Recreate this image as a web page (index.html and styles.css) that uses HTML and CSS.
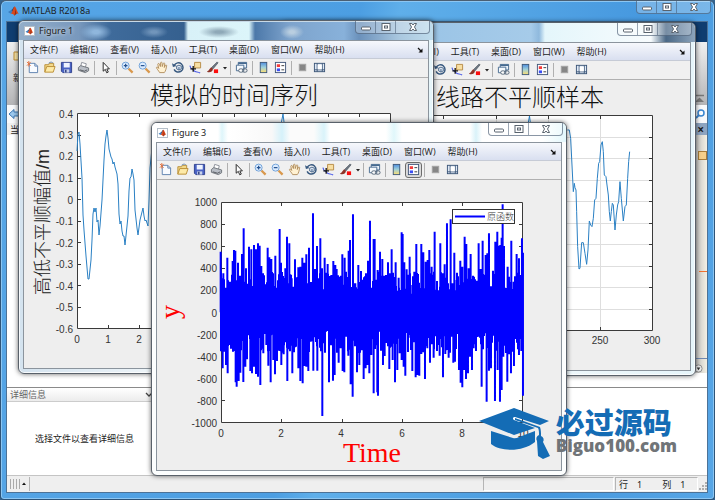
FILE: index.html
```html
<!DOCTYPE html>
<html lang="zh-CN">
<head>
  <meta charset="UTF-8">
  <meta name="viewport" content="width=device-width, initial-scale=1.0">
  <title>MATLAB R2018a</title>
  <link rel="stylesheet" href="styles.css">
</head>
<body>
  <svg class="sprite" aria-hidden="true">
    <defs>
      <linearGradient id="bar-fill" x1="0" y1="0" x2="0" y2="1">
        <stop offset="0" stop-color="#4f8fe0"/><stop offset=".5" stop-color="#9fd0d8"/><stop offset="1" stop-color="#ffdf70"/>
      </linearGradient>
    </defs>
    <symbol id="i-logo" viewBox="0 0 12 12">
      <path d="M0 7l3.500-2 2 2-2.500 2z" fill="#3c7fc0"/>
      <path d="M3.500 5C5 4.500 6 1 7.200 1L5.500 7z" fill="#274a78"/>
      <path d="M7.200 1c1.300 0 2.600 5 4.600 8.500-2-1.500-3-.5-4.800 1.700C6.200 9.500 5 8.500 3 9 5 8 6.200 1 7.200 1z" fill="#d9481c"/>
      <path d="M7.200 1c.8 2 .9 6-.2 10.200 1-1.200 1.600-1.800 2.300-2z" fill="#8f2a14"/>
    </symbol>
    <symbol id="i-new" viewBox="0 0 14 14">
      <path d="M3.500 2.500h6l3 3v7h-9z" fill="#f8fbff" stroke="#5b7fae"/>
      <path d="M9.500 2.500v3h3" fill="none" stroke="#5b7fae"/>
      <path d="M1 1l4 4M5 1L1 5M3 0v6" stroke="#e2703c" stroke-width="1"/>
    </symbol>
    <symbol id="i-open" viewBox="0 0 14 14">
      <path d="M2 12V4h4l1-1.500h4.500V6" fill="#f3d98a" stroke="#b98d33"/>
      <path d="M2 12l2-6h9l-2 6z" fill="#fdeaa8" stroke="#b98d33"/>
      <path d="M6 2.500c2-2 4-1.500 5 0" fill="none" stroke="#6f8fb5"/>
    </symbol>
    <symbol id="i-save" viewBox="0 0 14 14">
      <path d="M1.500 1.500h11v11h-9.500l-1.500-1.500z" fill="#4a63c4" stroke="#2c3f8c"/>
      <path d="M4 2h6.500v5H4z" fill="#eef3ff"/><path d="M4.500 9h5.500v3.500H4.500z" fill="#c9d2ea"/><path d="M5.500 9.500h1.500v3H5.500z" fill="#26367a"/>
    </symbol>
    <symbol id="i-print" viewBox="0 0 14 14">
      <path d="M4 6l1-4.500 5 1.500-1 4" fill="#fff" stroke="#8a8f98"/>
      <path d="M1.500 7L4 5l8.500 2.500v3L9 12.500 1.500 10z" fill="#b9bec6" stroke="#6c7178"/>
      <path d="M3 9.500l5 1.500 3-1.500" fill="none" stroke="#55595f"/>
    </symbol>
    <symbol id="i-arrow" viewBox="0 0 14 14">
      <path d="M4.500 1.500v9.500l2.300-2 1.500 3.700 1.700-.8-1.600-3.400h2.800z" fill="#fff" stroke="#222"/>
    </symbol>
    <symbol id="i-zoomin" viewBox="0 0 14 14">
      <path d="M8 8l4.500 4.500" stroke="#d9984c" stroke-width="2.400"/>
      <circle cx="5" cy="5" r="3.800" fill="#dcecff" stroke="#6d9fd6"/>
      <path d="M3 5h4M5 3v4" stroke="#22508f" stroke-width="1.300"/>
    </symbol>
    <symbol id="i-zoomout" viewBox="0 0 14 14">
      <path d="M8 8l4.500 4.500" stroke="#d9984c" stroke-width="2.400"/>
      <circle cx="5" cy="5" r="3.800" fill="#dcecff" stroke="#6d9fd6"/>
      <path d="M3 5h4" stroke="#22508f" stroke-width="1.300"/>
    </symbol>
    <symbol id="i-pan" viewBox="0 0 14 14">
      <path d="M5 12.500C4 10.500 1.500 8 1.500 7c.5-1 1.600-.3 2.500 1L3 3.500c.3-1.200 1.500-1 1.800 0L5.800 6 5.900 2c.4-1 1.500-.9 1.700 0l.2 4L9 2.500c.6-.8 1.500-.4 1.500.5L10 7l1.300-2.500c.8-.6 1.500 0 1.200 1C12 8 11.500 11 10 12.500z" fill="#fff1d2" stroke="#a9834f" stroke-width=".9"/>
    </symbol>
    <symbol id="i-rotate" viewBox="0 0 14 14">
      <path d="M2.500 4.500A5 5 0 1 1 2.300 9" fill="none" stroke="#38597f" stroke-width="1.600"/>
      <path d="M0 2.500l1 4 4-1z" fill="#38597f"/>
      <path d="M5 5.500l2.500-1 2.500 1v3l-2.500 1.300L5 8.500z" fill="#dce6f2" stroke="#38597f" stroke-width=".9"/><path d="M7.500 6.500v3" stroke="#38597f"/>
    </symbol>
    <symbol id="i-cursor" viewBox="0 0 14 14">
      <path d="M6 1.500h6.500v6H6z" fill="#f8dfa2" stroke="#b58a45"/>
      <path d="M1 5c1 5 3 3 4 5 2 3 4 1 7 3" fill="none" stroke="#4757e8" stroke-width="1.200"/>
      <path d="M1.500 8.500h6M4.500 5.500v6" stroke="#111" stroke-width="1.400"/>
    </symbol>
    <symbol id="i-brush" viewBox="0 0 14 14">
      <path d="M12 1L6 7l1.500 1.500L13 2z" fill="#6e7884" stroke="#47505a" stroke-width=".7"/>
      <path d="M6 7c-2 0-2 3-5 4.500 3 1.500 6 0 6.500-3z" fill="#8d3326"/>
      <path d="M8.500 9h4.500v4H8.500z" fill="#fb0d0d"/>
    </symbol>
    <symbol id="i-link" viewBox="0 0 14 14">
      <path d="M3.500 1.500h9v6h-9z" fill="#e8f0f8" stroke="#45698f"/><path d="M3.500 2.500h9" stroke="#45698f" stroke-width="1.500"/>
      <path d="M1.500 4.500h8v6h-8z" fill="#f5f9fd" stroke="#45698f"/>
      <rect x="4" y="8.500" width="5" height="3.500" rx="1.700" fill="#fff" stroke="#4d5f73"/><rect x="8" y="8.500" width="5" height="3.500" rx="1.700" fill="none" stroke="#4d5f73"/>
    </symbol>
    <symbol id="i-colorbar" viewBox="0 0 14 14">
      <rect x="3.500" y="1.500" width="7" height="11" fill="url(#bar-fill)" stroke="#3d5878"/>
    </symbol>
    <symbol id="i-legend" viewBox="0 0 14 14">
      <rect x="1.500" y="1.500" width="11" height="11" fill="#fff" stroke="#42577a"/>
      <path d="M3 3.500h3.500v3H3z" fill="#f23b3b"/><path d="M3 8h3.500v3H3z" fill="#3b4ef2"/>
      <path d="M8 5h3M8 9.500h3" stroke="#333"/>
    </symbol>
    <symbol id="i-hide" viewBox="0 0 14 14">
      <rect x="3.500" y="3.500" width="7" height="7" fill="#868686" stroke="#a5a5a5"/>
    </symbol>
    <symbol id="i-show" viewBox="0 0 14 14">
      <rect x="1.500" y="2.500" width="11" height="9" fill="#dfe9f5" stroke="#3b5577"/>
      <path d="M4.500 2.500v9M10 2.500v9M1.500 9.500h11" stroke="#3b5577"/><path d="M5 4h4.500v5H5z" fill="#fff"/>
    </symbol>
    <symbol id="i-min" viewBox="0 0 14 10"><rect x="2.500" y="5" width="9" height="3" rx="1" fill="#fff" stroke="#59636e"/></symbol>
    <symbol id="i-max" viewBox="0 0 14 10"><rect x="3" y="1.500" width="8" height="7" fill="#fff" stroke="#59636e"/><rect x="5.500" y="4" width="3" height="2" fill="#fff" stroke="#59636e"/></symbol>
    <symbol id="i-close" viewBox="0 0 14 10"><path d="M3.500 1.500h2.300L7 3l1.200-1.500h2.300L8.500 5l2 3.500H8.200L7 7 5.800 8.500H3.500l2-3.500z" fill="#fff" stroke="#59636e"/></symbol>
  </svg>

  <div class="app">
    <header class="titlebar">
      <svg class="logo"><use href="#i-logo"/></svg>
      <h1 class="caption">MATLAB R2018a</h1>
      <div class="controls" data-controls></div>
    </header>

    <main class="desktop">
      <div class="tabstrip"></div>
      <div class="ribbon">
        <div class="ribbon-item">
          <svg viewBox="0 0 12 12" width="12" height="12"><path d="M1 2h4l1 2h6v6H1z" fill="#fbe6a8" stroke="#bd8c35"/></svg>
          <span>新建</span>
        </div>
        <svg class="collapse" viewBox="0 0 9 9"><path d="M0 1.500h9" stroke="#777" stroke-width="1.500"/><path d="M0 8l4.500-4.500L9 8z" fill="#777"/></svg>
      </div>
      <div class="address">
        <svg viewBox="0 0 12 12" width="12" height="12"><path d="M1 6l5-4.500V4h5v4H6v2.500z" fill="#9cc8ee" stroke="#3d78b4"/></svg>
        <svg viewBox="0 0 12 12" width="12" height="12"><circle cx="7" cy="5" r="3" fill="#fff" stroke="#3a86d0" stroke-width="1.500"/><path d="M5 7L2 10" stroke="#3a86d0" stroke-width="1.800"/></svg>
      </div>
      <div class="panel-head">
        <span>当前文件夹</span>
        <span class="panel-close">×</span>
      </div>
      <div class="workspace">
        <div class="folder-list"></div>
        <div class="side-strip">
          <span class="chip"></span>
          <span class="marker"></span>
          <span class="round"><svg viewBox="0 0 10 10"><circle cx="5" cy="5" r="4" fill="#eee" stroke="#888"/><path d="M3 4h4L5 7z" fill="#333"/></svg></span>
        </div>
      </div>
      <section class="details">
        <h2>详细信息 <svg viewBox="0 0 8 6"><path d="M1 1l3 3 3-3" fill="none" stroke="#444" stroke-width="1.300"/></svg></h2>
        <p>选择文件以查看详细信息</p>
      </section>
      <footer class="status">
        <span class="grip"></span>
        <span class="up"><svg viewBox="0 0 4 4"><path d="M0 3l2-2.500L4 3z" fill="#111"/></svg></span>
        <span class="cell message"></span>
        <span class="cell position"><span>行</span><span>1</span><span>列</span><span>1</span></span>
        <svg class="resize" viewBox="0 0 9 9"><path d="M7 1h2M4 4h2M7 4h2M1 7h2M4 7h2M7 7h2" stroke="#999" stroke-width="1.500"/></svg>
      </footer>
    </main>
  </div>

  <section class="figure figure-2" aria-label="Figure 2">
    <header class="figure-title"><div class="controls" data-controls></div></header>
    <div class="figure-body">
      <div data-bars></div>
      <svg class="canvas" viewBox="0 0 404 290">
        <rect x="53.500" y="35.500" width="313" height="215" fill="#fff"/>
        <path class="grid" d="M210.500 36v214M262.500 36v214M314.500 36v214M54 57.500h312M54 78.500h312M54 100.500h312M54 121.500h312M54 143.500h312M54 164.500h312M54 186.500h312M54 207.500h312M54 229.500h312"/>
        <path class="axis" d="M53.500 35.500h313v215h-313zM157.500 36v3M210.500 36v3M262.500 36v3M314.500 36v3M314.500 250v-3M262.500 250v-3M366 57.500h-3M366 78.500h-3M366 100.500h-3M366 121.500h-3M366 143.500h-3M366 164.500h-3M366 186.500h-3M366 207.500h-3M366 229.500h-3"/>
        <path class="curve" d="M242 44l1.500-8 1 8"/>
        <polyline class="curve" transform="translate(174 35) scale(.3333)" points="322,45 328,45 332,70 336,150 340,230 343,205 345,218 348,225 350,290 353,395 357,462 360,460 365,383 370,383 375,415 380,448 384,405 388,318 392,330 396,335 400,310 404,255 408,250 412,190 416,145 419,140 423,90 427,80 430,110 433,180 438,185 441,210 445,240 448,290 451,318 454,290 457,265 460,270 465,345 469,300 473,270 476,260 480,200 484,250 490,318 495,275 499,270 503,190 506,140 509,110"/>
        <text class="plot-title" x="318" y="26" text-anchor="end">线路不平顺样本</text>
        <g class="tick" text-anchor="middle"><text x="314" y="264">250</text><text x="366" y="264">300</text></g>
      </svg>
    </div>
  </section>

  <section class="figure figure-1" aria-label="Figure 1">
    <header class="figure-title">
      <span class="logo-box"><svg><use href="#i-logo"/></svg></span>
      <h2 class="caption">Figure 1</h2>
      <div class="controls" data-controls></div>
    </header>
    <div class="figure-body">
      <div data-bars></div>
      <svg class="canvas" viewBox="0 0 404 290">
        <rect x="53.500" y="35.500" width="313" height="215" fill="#fff"/>
        <path class="axis" d="M53.500 35.500h313v215h-313zM84.500 36v3M115.500 36v3M147.500 36v3M178.500 36v3M210.500 36v3M241.500 36v3M272.500 36v3M304.500 36v3M335.500 36v3M84.500 250v-3M115.500 250v-3M54 57.500h3M54 78.500h3M54 100.500h3M54 121.500h3M54 143.500h3M54 164.500h3M54 186.500h3M54 207.500h3M54 229.500h3"/>
        <path class="curve" d="M257.500 44l1.500-8 1 8"/>
        <polyline class="curve" points="53,73 54,56 55,54 56,66 58,100 59,137 60,152 62,178 64,201 65,201 67,182 68,162 69,136 70,130 71,134 72,130 73,144 74,142 75,157 76,148 78,122 80,82 81,66 82,58 83,52 84,60 85,71 87,79 88,81 89,86 90,84 91,89 93,96 94,106 95,136 96,146 97,143 98,153 99,158 100,158 101,167 103,148 104,138 105,113 106,100 107,99 108,91 109,96 110,102 111,132 113,150 114,157 116,142 118,134 119,130 120,138 121,143 122,142 124,148 125,122 126,90 128,70"/>
        <text class="plot-title" x="210" y="26" text-anchor="middle">模拟的时间序列</text>
        <text class="axis-name" transform="translate(25 217) rotate(-90)">高低不平顺幅值/m</text>
        <g class="tick" text-anchor="end">
          <text x="49" y="40">0.4</text><text x="49" y="61">0.3</text><text x="49" y="82">0.2</text><text x="49" y="104">0.1</text><text x="49" y="126">0</text><text x="49" y="147">-0.1</text><text x="49" y="169">-0.2</text><text x="49" y="190">-0.3</text><text x="49" y="212">-0.4</text><text x="49" y="233">-0.5</text><text x="49" y="255">-0.6</text>
        </g>
        <g class="tick" text-anchor="middle"><text x="53" y="265">0</text><text x="84" y="265">1</text><text x="115" y="265">2</text></g>
      </svg>
    </div>
  </section>

  <section class="figure figure-3" aria-label="Figure 3">
    <header class="figure-title">
      <span class="logo-box"><svg><use href="#i-logo"/></svg></span>
      <h2 class="caption">Figure 3</h2>
      <div class="controls" data-controls></div>
    </header>
    <div class="figure-body">
      <div data-bars="legend"></div>
      <svg class="canvas" viewBox="0 0 404 290">
        <rect x="64.500" y="22.500" width="301" height="220" fill="#fff"/>
        <path class="axis" d="M64.500 22.500h301v220h-301zM124.500 23v3M185.500 23v3M245.500 23v3M305.500 23v3M124.500 242v-3M185.500 242v-3M245.500 242v-3M305.500 242v-3M65 44.500h3M65 66.500h3M65 88.500h3M65 220.500h3M365 44.500h-3M365 66.500h-3M365 220.500h-3"/>
        <path id="noise" class="noise" transform="translate(53 10) scale(.3333)"/>
        <rect x="295.500" y="29.500" width="62" height="14" fill="#fff" stroke="#333"/>
        <path d="M298 36.500h30" stroke="#0000ff" stroke-width="2"/>
        <text class="legend-name" x="330" y="40">原函数</text>
        <g class="tick" text-anchor="end">
          <text x="60" y="26">1000</text><text x="60" y="48">800</text><text x="60" y="70">600</text><text x="60" y="92">400</text><text x="60" y="114">200</text><text x="60" y="137">0</text><text x="60" y="159">-200</text><text x="60" y="181">-400</text><text x="60" y="203">-600</text><text x="60" y="225">-800</text><text x="60" y="247">-1000</text>
        </g>
        <g class="tick" text-anchor="middle"><text x="64" y="257">0</text><text x="124" y="257">2</text><text x="184" y="257">4</text><text x="245" y="257">6</text><text x="305" y="257">8</text><text x="366" y="257">10</text></g>
        <text class="red-name" x="215" y="282" text-anchor="middle">Time</text>
        <text class="red-name" transform="translate(22 139) rotate(-90)">y</text>
      </svg>
    </div>
  </section>

  <div class="brand">
    <svg viewBox="0 0 72 52">
      <path d="M0 13L35 0l35 13-9 4-25-8c-2-.5-3 2-1 3l21 8-21 7z" fill="#146cb5"/>
      <path d="M12 23l22 7c2 .6 4 0 6-1l16-6v11c-12 10-34 10-44 2z" fill="#146cb5"/>
      <path d="M36 10l25 9c1 3 1 6 1 9a4 4 0 0 1 2 6l7 14-7 3-5-3-1-15a4 4 0 0 1 2-6c0-3 0-5-1-7l-23-8z" fill="#146cb5"/>
    </svg>
    <div class="brand-text">
      <strong>必过源码</strong>
      <span>Biguo100.com</span>
    </div>
  </div>

  <template id="bars">
    <nav class="menubar">
      <button>文件(F)</button><button>编辑(E)</button><button>查看(V)</button><button>插入(I)</button><button>工具(T)</button><button>桌面(D)</button><button>窗口(W)</button><button>帮助(H)</button>
      <svg class="dock" viewBox="0 0 6 6"><path d="M1 1l3 3" stroke="#111" stroke-width="1.300"/><path d="M5.500 1.500v4h-4z" fill="#111"/></svg>
    </nav>
    <div class="toolbar"></div>
  </template>

  <script src="script.js"></script>
</body>
</html>
```
FILE: styles.css
```css
* {
  margin: 0;
  padding: 0;
  box-sizing: border-box;
}

body {
  font-family: "Noto Sans", "Noto Sans CJK SC", sans-serif;
  font-size: 9px;
  color: #1c1c1c;
  background: #35648f;
  min-height: 100vh;
  overflow: hidden;
}

button {
  font: inherit;
  color: inherit;
  background: none;
  border: none;
}

svg {
  display: block;
}

.sprite {
  position: absolute;
  width: 0;
  height: 0;
}

.caption {
  font-size: 9px;
  font-weight: 400;
  line-height: 12px;
}

/* main window */
.app {
  display: flex;
  flex-direction: column;
  height: 100vh;
  padding: 0 6px 6px 5px;
  background: linear-gradient(100deg, #57a6e6 0%, #4c9ee2 45%, #5fafea 50%, #4799df 80%, #57a6e6 100%);
  border: 1px solid #2e5478;
  border-top-color: #4a5f73;
  border-radius: 6px 6px 4px 4px;
  box-shadow: inset 0 0 0 1px #8cc6f2;
}

.titlebar {
  display: flex;
  align-items: center;
  gap: 3px;
  height: 20px;
  flex: none;
  padding-left: 2px;
}

.titlebar .logo {
  width: 11px;
  height: 12px;
}

.controls {
  display: flex;
  align-self: flex-start;
  margin-left: auto;
  height: 13px;
  border: 1px solid rgba(60, 80, 105, 0.6);
  border-top: none;
  border-radius: 0 0 4px 4px;
  background: rgba(255, 255, 255, 0.25);
}

.titlebar .controls {
  margin-right: -3px;
}

.controls button {
  width: 20px;
  display: flex;
  align-items: center;
  justify-content: center;
  border-right: 1px solid rgba(60, 80, 105, 0.5);
}

.controls button:last-child {
  width: 33px;
  border-right: none;
}

.controls svg {
  width: 14px;
  height: 10px;
}

.desktop {
  flex: 1;
  display: flex;
  flex-direction: column;
  min-height: 0;
  background: #fff;
  border: 1px solid #4d7296;
}

.tabstrip {
  height: 20px;
  background: #0f3d70;
}

.ribbon {
  display: flex;
  justify-content: space-between;
  height: 63px;
  padding: 8px 3px 2px 6px;
  background: linear-gradient(#f0f0f0, #b4b4b6);
}

.ribbon-item {
  display: flex;
  flex-direction: column;
  gap: 9px;
}

.collapse {
  width: 9px;
  height: 9px;
  align-self: flex-end;
}

.address {
  display: flex;
  align-items: center;
  justify-content: space-between;
  height: 18px;
  background: #f8f9fb;
  padding: 0 1px;
}

.panel-head {
  display: flex;
  align-items: center;
  justify-content: space-between;
  height: 12px;
  padding: 0 3px;
  background: linear-gradient(90deg, #f0f0f0 50%, #8da4c0 50%);
}

.panel-close {
  font-size: 12px;
  font-weight: 700;
}

.workspace {
  flex: 1;
  display: flex;
  justify-content: space-between;
  border-bottom: 1px solid #8a8a8a;
}

.side-strip {
  width: 14px;
  display: flex;
  flex-direction: column;
  align-items: flex-end;
  background: linear-gradient(90deg, #b8b8b8, #f4f0e4);
  padding-top: 16px;
  margin-bottom: 14px;
}

.chip {
  width: 9px;
  height: 9px;
  border: 1px solid #a87d3a;
  background: #f5cf8a;
}

.marker {
  width: 8px;
  height: 1px;
  flex: none;
  margin-top: 111px;
  background: #f07030;
}

.round {
  margin-top: auto;
  padding: 5px 4px 0 0;
  border-top: 1px solid #7088b0;
}

.round svg {
  width: 9px;
  height: 9px;
}

.details h2 {
  display: flex;
  align-items: center;
  height: 14px;
  width: 146px;
  padding-left: 3px;
  font-size: 9px;
  font-weight: 400;
  color: #666;
  background: linear-gradient(#fff, #ececec);
  border-bottom: 1px solid #ccc;
}

.details h2 svg {
  width: 8px;
  height: 6px;
  margin-left: auto;
}

.details p {
  height: 73px;
  padding-left: 28px;
  line-height: 74px;
}

.status {
  display: flex;
  align-items: center;
  height: 17px;
  padding: 1px 0;
  background: #efefef;
  border-top: 1px solid #c4c4c4;
}

.grip {
  width: 11px;
  height: 10px;
  margin-left: 3px;
  background: repeating-linear-gradient(90deg, #aaa 0 1px, #efefef 1px 3px);
}

.up {
  display: flex;
  align-items: center;
  height: 14px;
  padding: 0 3px 0 1px;
  border-right: 1px solid #b5b5b5;
}

.up svg {
  width: 4px;
  height: 4px;
}

.cell {
  height: 14px;
  border: 1px solid #b5b5b5;
  border-right-color: #fff;
  border-bottom-color: #fff;
}

.message {
  width: 131px;
  margin-left: auto;
}

.position {
  display: flex;
  align-items: center;
  gap: 9px;
  width: 83px;
  margin-left: 1px;
  padding-left: 3px;
}

.position span:nth-child(3) {
  margin-left: 11px;
}

.resize {
  width: 9px;
  height: 9px;
  align-self: flex-end;
}

/* figure windows */
.figure {
  position: absolute;
  width: 416px;
  padding: 0 4px 4px;
  border: 1px solid #59616a;
  border-radius: 6px;
  background: linear-gradient(90deg, #d4e3ef 0, #f4f9fb 40%, #e6f5fa 100%);
  box-shadow: 0 0 5px rgba(0, 0, 0, 0.6), inset 0 0 0 1px rgba(255, 255, 255, 0.8);
}

.figure-1 {
  left: 18px;
  top: 20px;
}

.figure-2 {
  left: 280px;
  top: 22px;
}

.figure-3 {
  left: 151px;
  top: 122px;
  background: #fcfefe;
}

.figure-title {
  display: flex;
  align-items: center;
  gap: 4px;
  height: 19px;
  margin: 0 -4px;
  padding: 0 3px 0 5px;
  border-radius: 5px 5px 0 0;
}

.figure-1 .figure-title {
  background:
    radial-gradient(ellipse 16px 8px at 77px 11px, #8fb6dc 20%, transparent),
    radial-gradient(ellipse 14px 6px at 135px 11px, #7195bb 20%, transparent),
    radial-gradient(ellipse 20px 6px at 200px 11px, #8fa9b8 20%, transparent),
    radial-gradient(ellipse 12px 7px at 273px 11px, #b9cee0 20%, transparent),
    linear-gradient(90deg, #93aec9 0, #7898bd 60px, #3f6b9b 90px, #35608f 165px, #d8f1f8 169px, #dcf5fa 230px, #4c78a9 236px, #7da3cc 270px, #88b1da 325px, #6b91bb 340px, #a9c7df 380px, #bfdcec 100%);
  box-shadow: inset 0 1px #c8d9e6;
}

.figure-2 .figure-title {
  background: linear-gradient(90deg, #8bbbe3 0, #a6cbe9 250px, #8fb9dd 258px, #e4f6fb 264px, #f7fbfd 370px, #4a6886 385px, #8ba3bb 100%);
}

.figure-3 .figure-title {
  background: linear-gradient(90deg, #fff 0, #fff 66px, #def5fa 70px, #fff 76px, #f8f8f8 120px, #d5f1fa 130px, #fbfbfb 138px, #fbfbfb 162px, #d9f3fa 172px, #fff 178px, #fff 234px, #e0f7fb 242px, #fff 250px, #fff 318px, #d9f2f9 324px, #fff 330px, #fff 390px, #e3f7fc 100%);
}

.figure-title .logo-box {
  width: 11px;
  height: 10px;
  background: #fff;
  border: 1px solid #b5bfc9;
}

.logo-box svg {
  width: 9px;
  height: 8px;
}

.figure-title .logo-box + .caption {
  text-shadow: 0 0 4px #fff;
}

.figure-body {
  border: 1px solid #8b949d;
  background: #eeeeee;
}

.menubar {
  display: flex;
  align-items: center;
  gap: 12px;
  height: 17px;
  padding: 0 5px 0 6px;
  font-family: "Open Sans", "Noto Sans CJK SC", sans-serif;
  background: linear-gradient(#f6f8fc, #d9dff0);
}

.menubar button {
  line-height: 14px;
  white-space: nowrap;
}

.dock {
  width: 6px;
  height: 6px;
  margin-left: auto;
}

.toolbar {
  display: flex;
  align-items: center;
  height: 20px;
  padding-bottom: 1px;
  background: #f0f0f0;
  border-top: 1px solid #c6cbd6;
  border-bottom: 1px solid #b0b0b0;
}

.toolbar button {
  width: 17px;
  height: 16px;
  display: flex;
  align-items: center;
  justify-content: center;
  border: 1px solid transparent;
  border-radius: 3px;
}

.toolbar button.pressed {
  border-color: #6c6c6c;
  background: #dcdcdc;
}

.toolbar svg {
  width: 13px;
  height: 13px;
  flex: none;
}

.toolbar .caret {
  width: 7px;
  display: flex;
  justify-content: center;
}

.toolbar .caret svg {
  width: 4px;
  height: 4px;
}

.separator {
  width: 1px;
  height: 14px;
  margin: 0 2px;
  background: #b0b0b0;
}

.canvas {
  width: 100%;
  overflow: visible;
  font-family: "Liberation Sans", "Noto Sans CJK SC", sans-serif;
}

.axis {
  fill: none;
  stroke: #3a3a3a;
}

.grid {
  stroke: #dedede;
}

.curve {
  fill: none;
  stroke: #2a80c4;
  vector-effect: non-scaling-stroke;
}

.noise {
  fill: none;
  stroke: #0000ff;
  stroke-width: 6;
}

.tick {
  font-size: 10px;
  fill: #333;
}

.plot-title {
  font-size: 24px;
  font-weight: 300;
  fill: #111;
}

.axis-name {
  font-size: 18px;
  font-weight: 300;
  fill: #222;
}

.legend-name {
  font-size: 9px;
  font-weight: 300;
  fill: #333;
}

.red-name {
  font-family: "Liberation Serif", serif;
  font-size: 28px;
  fill: #ff0000;
}

/* brand overlay */
.brand {
  position: absolute;
  right: 38px;
  bottom: 40px;
  display: flex;
  gap: 5px;
}

.brand svg {
  width: 72px;
  height: 52px;
}

.brand-text {
  display: flex;
  flex-direction: column;
}

.brand-text strong {
  font-family: "Noto Sans CJK SC", sans-serif;
  font-size: 29px;
  font-weight: 900;
  line-height: 26px;
  color: #146cb5;
}

.brand-text span {
  font-family: "Open Sans", sans-serif;
  font-size: 17px;
  font-weight: 800;
  line-height: 24px;
  color: #707478;
}
```
FILE: script.js
```js
// window buttons
document.querySelectorAll('[data-controls]').forEach((box) => {
  [['min', '最小化'], ['max', '最大化'], ['close', '关闭']].forEach(([icon, label]) => {
    box.insertAdjacentHTML('beforeend', `<button aria-label="${label}"><svg><use href="#i-${icon}"/></svg></button>`);
  });
});

// menu bar and toolbar, the same in every figure
const tools = ['new', 'open', 'save', 'print', '|', 'arrow', '|', 'zoomin', 'zoomout', 'pan', 'rotate',
  'cursor', 'brush', 'v', '|', 'link', '|', 'colorbar', 'legend', '|', 'hide', 'show'];

document.querySelectorAll('[data-bars]').forEach((box) => {
  box.append(document.getElementById('bars').content.cloneNode(true));
  box.querySelector('.toolbar').innerHTML = tools.map((t) => {
    if (t === '|') return '<span class="separator"></span>';
    if (t === 'v') return '<span class="caret"><svg viewBox="0 0 4 4"><path d="M0 1h4L2 3.500z" fill="#222"/></svg></span>';
    const cls = box.dataset.bars === t ? ' class="pressed"' : '';
    return `<button${cls} aria-label="${t}"><svg><use href="#i-${t}"/></svg></button>`;
  }).join('');
});

// noise signal: x,y of the peaks above and below the zero line
const tops = '32,185 40,250 52,203 60,275 68,213 72,180 76,182 84,218 90,257 96,192 101,115 108,235 117,170 124,178 132,165 138,178 144,160 149,167 154,228 165,283 173,173 178,202 184,207 190,290 196,197 209,117 213,218 219,290 226,235 231,140 238,160 245,265 250,290 255,208 265,232 271,230 277,203 283,218 289,193 297,173 309,70 315,237 321,168 331,145 336,235 344,203 353,222 364,255 370,213 376,225 380,237 386,262 397,193 404,203 410,298 416,182 420,150 429,73 436,280 445,225 453,243 462,262 468,250 474,212 480,92 491,147 494,147 503,240 510,185 517,207 524,280 528,255 534,217 539,250 545,178 552,277 557,217 566,263 575,127 578,132 583,217 590,238 599,200 607,285 613,245 619,162 626,293 634,162 640,187 647,215 653,210 658,180 665,230 674,125 681,308 691,160 698,250 704,223 711,100 722,88 727,280 733,188 740,270 751,212 757,230 764,140 769,162 776,235 782,192 789,257 797,305 806,160 812,237 818,152 827,195 832,190 837,130 843,292 849,242 856,155 862,125 867,167 871,165 875,143 878,43 882,168 889,305 893,230 897,260 904,152 911,275 920,192 927,205 933,255 936,145 939,188';
const bottoms = '33,447 38,535 43,485 48,525 53,550 58,465 64,450 69,485 77,577 80,590 86,573 91,548 100,576 106,530 111,508 121,543 126,550 132,530 138,552 144,560 151,585 160,490 169,465 175,527 182,577 190,510 195,553 201,513 208,473 214,525 221,493 232,573 238,478 247,550 255,472 265,535 271,573 278,580 284,528 289,530 295,543 302,455 310,542 322,542 331,425 337,678 345,488 357,577 369,572 374,555 386,518 392,475 398,543 403,547 408,440 415,497 422,583 428,620 435,468 441,547 448,525 455,430 461,567 467,535 472,525 478,550 484,495 491,610 502,607 504,617 513,455 519,525 524,498 532,430 538,537 548,510 555,577 562,540 569,490 575,510 581,530 586,557 596,443 607,543 617,562 623,555 628,557 634,492 645,567 652,475 660,518 671,503 676,400 683,465 689,497 699,562 706,492 716,503 725,440 730,518 735,515 741,415 747,540 752,578 757,592 763,540 768,567 774,550 780,500 786,540 791,475 798,483 804,440 815,590 823,415 830,635 837,542 843,535 849,425 855,633 863,540 870,635 875,600 880,500 886,443 892,575 897,493 903,550 912,528 920,438 927,495 934,483 939,617';

let seed = 7;
function random() {
  seed = (seed * 16807) % 2147483647;
  return seed / 2147483647;
}

let d = '';
(tops + ' ' + bottoms).split(' ').forEach((p) => {
  d += `M${p.replace(',', ' ')}V367`;
});
for (let x = 33; x < 940; x += 3) {
  d += `M${x} ${Math.round(245 + random() * 70)}V${Math.round(415 + random() * 75)}`;
}
document.getElementById('noise').setAttribute('d', d);
```
